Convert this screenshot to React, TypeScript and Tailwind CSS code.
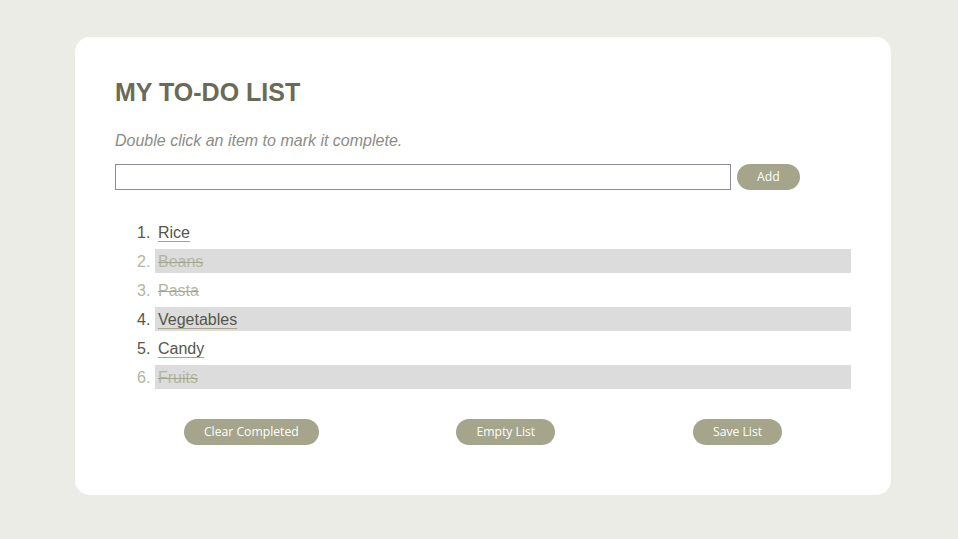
import React, { useState } from 'react';

type Item = { text: string; done: boolean };

const initialItems: Item[] = [
  { text: 'Rice', done: false },
  { text: 'Beans', done: true },
  { text: 'Pasta', done: true },
  { text: 'Vegetables', done: false },
  { text: 'Candy', done: false },
  { text: 'Fruits', done: true },
];

const btn =
  'h-[26px] rounded-full bg-[#a4a58b] px-5 text-[12.2px] text-white font-["Open_Sans",sans-serif] leading-none';

const App: React.FC = () => {
  const [items, setItems] = useState<Item[]>(initialItems);
  const [value, setValue] = useState('');

  const toggle = (i: number) =>
    setItems(items.map((it, idx) => (idx === i ? { ...it, done: !it.done } : it)));

  const addItem = () => {
    if (!value.trim()) return;
    setItems([...items, { text: value.trim(), done: false }]);
    setValue('');
  };

  return (
    <div className="min-h-[539px] bg-[#ecece7] pt-[37px] pb-[44px] font-['Liberation_Sans',Arial,sans-serif]">
      <div className="ml-[75px] w-[816px] rounded-[15px] bg-white px-10 pt-[40px] pb-[50px]">
        <h1 className="text-[25px] font-bold leading-[30px] text-[#696b55]">MY TO-DO LIST</h1>
        <p className="mt-[24px] text-[16px] italic leading-[20px] text-[#8c8c84]">
          Double click an item to mark it complete.
        </p>

        <div className="mt-[13px] flex items-center gap-[6px]">
          <input
            value={value}
            onChange={(e) => setValue(e.target.value)}
            className="h-[26px] w-[616px] border border-[#8f8a99] px-1 text-[14px] outline-none"
          />
          <button onClick={addItem} className={btn}>
            Add
          </button>
        </div>

        <ol className="mt-[30px] flex flex-col gap-[5px] pl-10">
          {items.map((it, i) => (
            <li
              key={i}
              onDoubleClick={() => toggle(i)}
              className={`flex h-[24px] items-center pt-[2px] text-[16px] ${
                i % 2 === 1 ? 'bg-[#dcdcdc]' : ''
              } ${it.done ? 'text-[#b3b5a0]' : 'text-[#55564a]'}`}
            >
              <span className="-ml-[18px] w-[18px] shrink-0">{i + 1}.</span>
              <span
                className={`pl-[3px] decoration-[#a4a58b] ${
                  it.done ? 'line-through' : 'underline underline-offset-[3px]'
                }`}
              >
                {it.text}
              </span>
            </li>
          ))}
        </ol>

        <div className="mt-[30px] flex justify-around">
          <button onClick={() => setItems(items.filter((it) => !it.done))} className={btn}>
            Clear Completed
          </button>
          <button onClick={() => setItems([])} className={btn}>
            Empty List
          </button>
          <button className={btn}>Save List</button>
        </div>
      </div>
    </div>
  );
};

export default App;
